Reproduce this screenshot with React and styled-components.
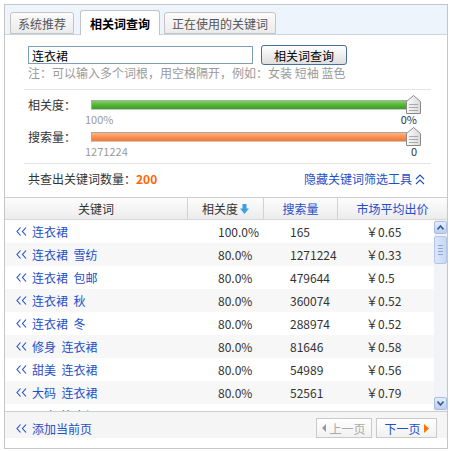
import React from "react";
import styled, { createGlobalStyle } from "styled-components";

const GlobalStyle = createGlobalStyle`
  body {
    margin: 0;
    background: #fff;
    font-family: "Noto Sans CJK SC", "Liberation Sans", sans-serif;
    font-size: 12px;
    color: #333;
  }
`;

const BLUE = "#1f4fc9";

const Frame = styled.div`
  box-sizing: border-box;
  margin: 4px 0 0 4px;
  width: 444px;
  height: 445px;
  border: 1px solid #c6c6c6;
  display: flex;
  flex-direction: column;
  overflow: hidden;
`;

const TabBar = styled.div`
  box-sizing: border-box;
  height: 30px;
  background: #eef4fb;
  border-bottom: 1px solid #c9d5e4;
  display: flex;
  align-items: flex-end;
  padding-left: 5px;
`;

const Tab = styled.div`
  box-sizing: border-box;
  height: ${(p) => (p.$active ? "25px" : "22px")};
  margin-bottom: ${(p) => (p.$active ? "-1px" : "0")};
  margin-right: ${(p) => (p.$active ? "4px" : "6px")};
  padding: ${(p) => (p.$active ? "2px 9px 0" : "2px 7px 0")};
  display: flex;
  align-items: center;
  border: 1px solid #c4c4c4;
  border-bottom: ${(p) => (p.$active ? "none" : "1px solid #c4c4c4")};
  border-radius: 3px 3px 0 0;
  background: ${(p) =>
    p.$active ? "#fff" : "linear-gradient(#fbfbfb, #ebebeb)"};
  color: ${(p) => (p.$active ? "#000" : "#555")};
  font-weight: ${(p) => (p.$active ? "bold" : "normal")};
  line-height: 14px;
`;

const Filter = styled.div`
  padding: 10px 16px 0 19px;
`;

const SearchRow = styled.div`
  display: flex;
  align-items: center;
  padding-left: 4px;
  height: 20px;
`;

const Input = styled.input`
  box-sizing: border-box;
  width: 225px;
  height: 18px;
  border: 1px solid #7f9db9;
  padding: 0 3px;
  font: 12px "Noto Sans CJK SC", sans-serif;
  color: #000;
  outline: none;
`;

const QueryButton = styled.button`
  box-sizing: border-box;
  margin-left: 8px;
  width: 86px;
  height: 20px;
  padding: 0;
  border: 1px solid #4a6f9a;
  border-radius: 3px;
  background: linear-gradient(#ffffff, #dedede);
  font: 12px "Noto Sans CJK SC", sans-serif;
  color: #000;
`;

const Hint = styled.div`
  margin-top: 1px;
  padding-left: 4px;
  line-height: 14px;
  color: #9a9a9a;
`;

const Divider = styled.div`
  height: 1px;
  background: #e4e4e4;
  margin-top: ${(p) => p.$top}px;
`;

const SliderBlock = styled.div`
  margin-top: ${(p) => p.$top}px;
  padding-left: 4px;
`;

const SliderTop = styled.div`
  display: flex;
  align-items: center;
  height: 10px;
`;

const SliderLabel = styled.span`
  width: 63px;
  line-height: 14px;
  color: #333;
`;

const Track = styled.div`
  position: relative;
  width: 330px;
  height: 10px;
`;

const Fill = styled.div`
  box-sizing: border-box;
  width: 320px;
  height: 10px;
  border: 1px solid #a9a9a9;
  border-bottom-color: #c8c8c8;
  background: ${(p) =>
    p.$tone === "green"
      ? "linear-gradient(#7fd35b, #4caf2f 60%, #3f9a27)"
      : "linear-gradient(#ffb482, #ff8a48 60%, #f07a36)"};
`;

const Thumb = styled.svg`
  position: absolute;
  right: 0;
  top: -5px;
`;

const SliderValues = styled.div`
  margin: 2px 0 0 57px;
  width: 332px;
  display: flex;
  justify-content: space-between;
  line-height: 14px;
  color: #9a9a9a;
  font-size: 11px;
`;

const MaxValue = styled.span`
  color: #333;
`;

const Summary = styled.div`
  margin-top: 8px;
  padding: 0 6px 0 4px;
  display: flex;
  justify-content: space-between;
  align-items: center;
  line-height: 14px;
`;

const Count = styled.b`
  color: #ff6600;
`;

const ToggleLink = styled.span`
  display: flex;
  align-items: center;
  gap: 3px;
  color: ${BLUE};
`;

const Table = styled.div`
  margin-top: 11px;
  display: flex;
  flex-direction: column;
  flex: 1;
`;

const Columns = "182px 76px 74px 1fr";

const HeadRow = styled.div`
  box-sizing: border-box;
  height: 23px;
  display: grid;
  grid-template-columns: ${Columns};
  border-top: 1px solid #cfcfcf;
  border-bottom: 1px solid #d6d6d6;
  background: linear-gradient(#fdfdfd, #ececec);
`;

const HeadCell = styled.div`
  display: flex;
  align-items: center;
  justify-content: center;
  gap: 2px;
  color: ${(p) => (p.$link ? BLUE : "#333")};
  border-left: ${(p) => (p.$first ? "none" : "1px solid #d2d2d2")};
`;

const Body = styled.div`
  display: flex;
  height: 191px;
`;

const Rows = styled.div`
  flex: 1;
  overflow: hidden;
`;

const Row = styled.div`
  height: 23px;
  display: grid;
  grid-template-columns: ${Columns};
  align-items: center;
  background: ${(p) => (p.$alt ? "#f7f7f7" : "#fff")};
`;

const Cell = styled.div`
  padding-left: ${(p) => p.$pad}px;
  display: flex;
  align-items: center;
  color: ${(p) => (p.$link ? BLUE : "#333")};
  white-space: pre;
`;

const Chevrons = styled.svg`
  margin-right: 5px;
`;

const ScrollBar = styled.div`
  width: 13px;
  background: #f2f3f7;
  display: flex;
  flex-direction: column;
  padding-top: 1px;
`;

const ScrollButton = styled.div`
  box-sizing: border-box;
  width: 13px;
  height: 13px;
  border: 1px solid #a9bee2;
  border-radius: 2px;
  background: linear-gradient(#e3ecfb, #bccff0);
  display: flex;
  align-items: center;
  justify-content: center;
  margin-top: ${(p) => (p.$bottom ? "auto" : "0")};
  margin-bottom: ${(p) => (p.$bottom ? "1px" : "0")};
`;

const ScrollThumb = styled.div`
  box-sizing: border-box;
  margin-top: 2px;
  width: 13px;
  height: 28px;
  border: 1px solid #b3c6e8;
  border-radius: 2px;
  background: linear-gradient(90deg, #dbe6f9, #c8d8f4);
  display: flex;
  flex-direction: column;
  align-items: center;
  justify-content: center;
  gap: 2px;
`;

const Grip = styled.div`
  width: 5px;
  height: 1px;
  background: #8ea6d3;
`;

const Footer = styled.div`
  box-sizing: border-box;
  height: 37px;
  border-top: 1px solid #cdcdcd;
`;

const FooterBar = styled.div`
  height: 26px;
  background: #f5f5f5;
  display: flex;
  align-items: flex-end;
  justify-content: space-between;
  padding: 0 10px 0 11px;
`;

const AddPage = styled.span`
  display: flex;
  align-items: center;
  height: 20px;
  color: ${BLUE};
`;

const Pager = styled.div`
  display: flex;
  gap: 4px;
`;

const PageButton = styled.div`
  box-sizing: border-box;
  width: ${(p) => p.$w}px;
  height: 20px;
  border: 1px solid #cacaca;
  background: linear-gradient(#ffffff, #f1f1f1);
  display: flex;
  align-items: center;
  justify-content: center;
  gap: 3px;
  color: ${(p) => (p.$off ? "#aaa" : BLUE)};
`;

const DoubleLeft = () => (
  <Chevrons width="11" height="9" viewBox="0 0 11 9">
    <polyline points="4.5,0.5 1,4.5 4.5,8.5" fill="none" stroke={BLUE} strokeWidth="1.1" />
    <polyline points="10,0.5 6.5,4.5 10,8.5" fill="none" stroke={BLUE} strokeWidth="1.1" />
  </Chevrons>
);

const SliderThumb = () => (
  <Thumb width="15" height="19" viewBox="0 0 15 19">
    <defs>
      <linearGradient id="th" x1="0" x2="1">
        <stop offset="0" stopColor="#fafafa" />
        <stop offset="1" stopColor="#d9d9d9" />
      </linearGradient>
    </defs>
    <polygon points="7.5,0.5 14.5,6.5 14.5,18.5 0.5,18.5 0.5,6.5" fill="url(#th)" stroke="#8a8a8a" />
    <line x1="3" y1="9.5" x2="12" y2="9.5" stroke="#aaa" />
    <line x1="3" y1="12.5" x2="12" y2="12.5" stroke="#aaa" />
    <line x1="3" y1="15.5" x2="12" y2="15.5" stroke="#aaa" />
  </Thumb>
);

const Slider = ({ label, tone, min, max, top }) => (
  <SliderBlock $top={top}>
    <SliderTop>
      <SliderLabel>{label}</SliderLabel>
      <Track>
        <Fill $tone={tone} />
        <SliderThumb />
      </Track>
    </SliderTop>
    <SliderValues>
      <span>{min}</span>
      <MaxValue>{max}</MaxValue>
    </SliderValues>
  </SliderBlock>
);

// last row only peeks in under the footer, as in the list it scrolls
const rows = [
  ["连衣裙", "100.0%", "165", "￥0.65"],
  ["连衣裙  雪纺", "80.0%", "1271224", "￥0.33"],
  ["连衣裙  包邮", "80.0%", "479644", "￥0.5"],
  ["连衣裙  秋", "80.0%", "360074", "￥0.52"],
  ["连衣裙  冬", "80.0%", "288974", "￥0.52"],
  ["修身  连衣裙", "80.0%", "81646", "￥0.58"],
  ["甜美  连衣裙", "80.0%", "54989", "￥0.56"],
  ["大码  连衣裙", "80.0%", "52561", "￥0.79"],
  ["显瘦  连衣裙", "80.0%", "48210", "￥0.61"],
];

export default function App() {
  return (
    <>
      <GlobalStyle />
      <Frame>
        <TabBar>
          <Tab>系统推荐</Tab>
          <Tab $active>相关词查询</Tab>
          <Tab>正在使用的关键词</Tab>
        </TabBar>

        <Filter>
          <SearchRow>
            <Input defaultValue="连衣裙" />
            <QueryButton>相关词查询</QueryButton>
          </SearchRow>
          <Hint>注：可以输入多个词根，用空格隔开，例如：女装 短袖 蓝色</Hint>
          <Divider $top={9} />
          <Slider label="相关度：" tone="green" min="100%" max="0%" top={10} />
          <Slider label="搜索量：" tone="orange" min="1271224" max="0" top={6} />
          <Divider $top={5} />
          <Summary>
            <span>
              共查出关键词数量：<Count>200</Count>
            </span>
            <ToggleLink>
              隐藏关键词筛选工具
              <svg width="10" height="11" viewBox="0 0 10 11">
                <polyline points="1,5 5,1 9,5" fill="none" stroke={BLUE} strokeWidth="1.1" />
                <polyline points="1,10 5,6 9,10" fill="none" stroke={BLUE} strokeWidth="1.1" />
              </svg>
            </ToggleLink>
          </Summary>
        </Filter>

        <Table>
          <HeadRow>
            <HeadCell $first>关键词</HeadCell>
            <HeadCell>
              相关度
              <svg width="9" height="10" viewBox="0 0 9 10">
                <rect x="2.5" y="0" width="4" height="5" fill="#3f9fe0" />
                <polygon points="0,4.5 9,4.5 4.5,10" fill="#3f9fe0" />
              </svg>
            </HeadCell>
            <HeadCell $link>搜索量</HeadCell>
            <HeadCell $link>市场平均出价</HeadCell>
          </HeadRow>

          <Body>
            <Rows>
              {rows.map((r, i) => (
                <Row key={i} $alt={i % 2 === 1}>
                  <Cell $pad={11} $link>
                    <DoubleLeft />
                    {r[0]}
                  </Cell>
                  <Cell $pad={31}>{r[1]}</Cell>
                  <Cell $pad={27}>{r[2]}</Cell>
                  <Cell $pad={29}>{r[3]}</Cell>
                </Row>
              ))}
            </Rows>
            <ScrollBar>
              <ScrollButton>
                <svg width="7" height="5" viewBox="0 0 7 5">
                  <polyline points="0.5,4.5 3.5,1 6.5,4.5" fill="none" stroke="#3d5a8c" strokeWidth="1.6" />
                </svg>
              </ScrollButton>
              <ScrollThumb>
                <Grip />
                <Grip />
                <Grip />
                <Grip />
              </ScrollThumb>
              <ScrollButton $bottom>
                <svg width="7" height="5" viewBox="0 0 7 5">
                  <polyline points="0.5,0.5 3.5,4 6.5,0.5" fill="none" stroke="#3d5a8c" strokeWidth="1.6" />
                </svg>
              </ScrollButton>
            </ScrollBar>
          </Body>

          <Footer>
            <FooterBar>
              <AddPage>
                <DoubleLeft />
                添加当前页
              </AddPage>
              <Pager>
                <PageButton $w={56} $off>
                  <svg width="4" height="8" viewBox="0 0 4 8">
                    <polygon points="4,0 0,4 4,8" fill="#999" />
                  </svg>
                  上一页
                </PageButton>
                <PageButton $w={61}>
                  下一页
                  <svg width="5" height="9" viewBox="0 0 5 9">
                    <polygon points="0,0 5,4.5 0,9" fill="#ff7200" />
                  </svg>
                </PageButton>
              </Pager>
            </FooterBar>
          </Footer>
        </Table>
      </Frame>
    </>
  );
}
